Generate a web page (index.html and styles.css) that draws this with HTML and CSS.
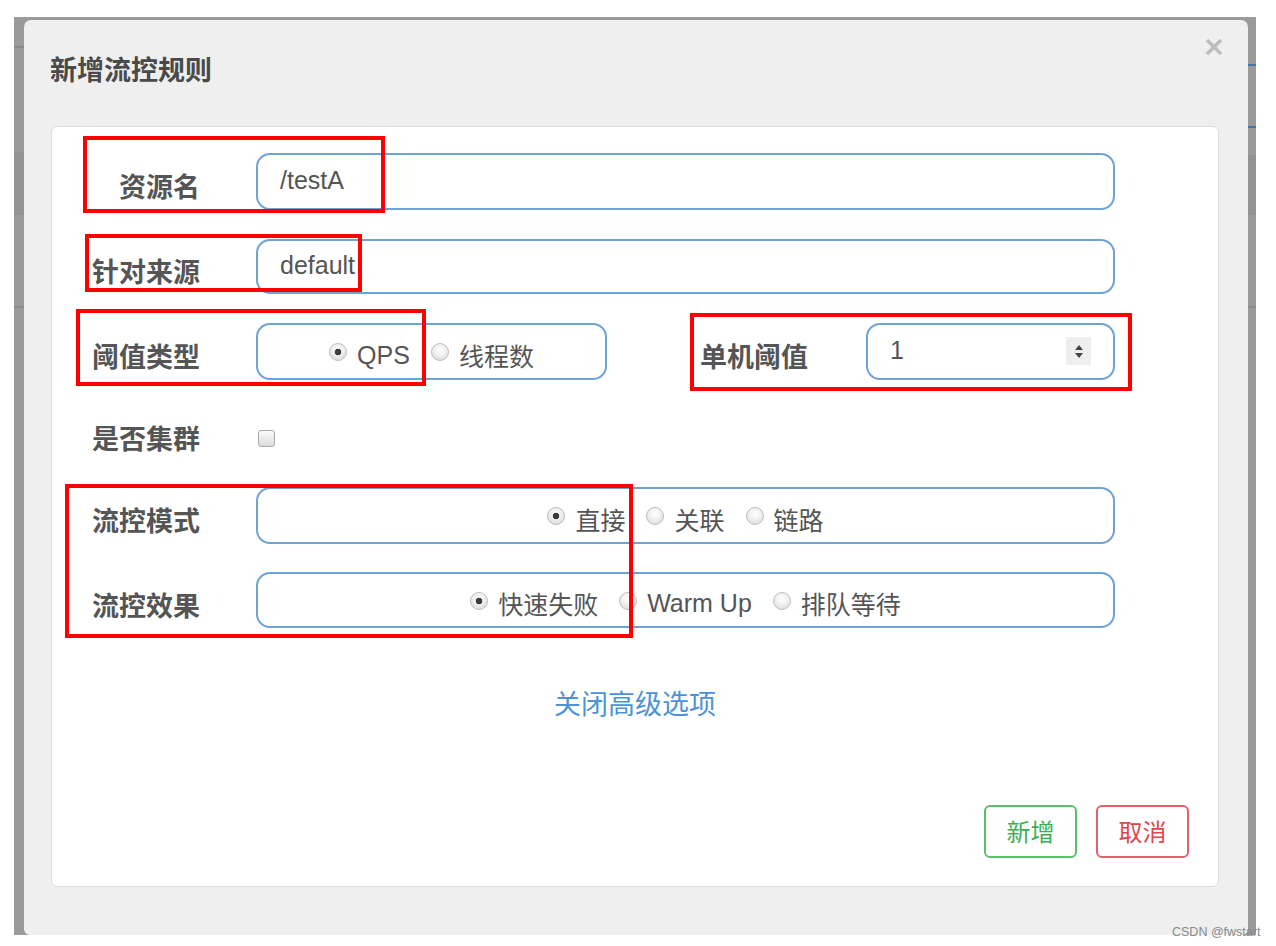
FILE: index.html
```html
<!DOCTYPE html>
<html lang="zh-CN">
<head>
<meta charset="utf-8">
<title>新增流控规则</title>
<link rel="stylesheet" href="styles.css">
</head>
<body>
<div class="page">
  <div class="backdrop">
    <div class="strip strip-left"></div>
    <div class="modal">
      <div class="modal-header">
        <h4 class="modal-title">新增流控规则</h4>
        <span class="close" aria-label="关闭">
          <svg width="20" height="20" viewBox="0 0 20 20"><path d="M3 3 L17 17 M17 3 L3 17" stroke="#bdbdbd" stroke-width="3.6" stroke-linecap="butt"/></svg>
        </span>
      </div>
      <div class="panel">
        <div class="row row-1">
          <label class="label">资源名</label>
          <div class="input input-wide"><span class="value">/testA</span></div>
        </div>
        <div class="row row-2">
          <label class="label">针对来源</label>
          <div class="input input-wide"><span class="value">default</span></div>
        </div>
        <div class="row row-3">
          <label class="label">阈值类型</label>
          <div class="input radio-box box-type">
            <label class="radio-item"><input type="radio" name="grade" checked><span class="latin">QPS</span></label>
            <label class="radio-item"><input type="radio" name="grade"><span>线程数</span></label>
          </div>
          <label class="label label-count">单机阈值</label>
          <div class="input input-count">
            <span class="value">1</span>
            <span class="spinner"><span class="tri-up"></span><span class="tri-down"></span></span>
          </div>
        </div>
        <div class="row row-4">
          <label class="label">是否集群</label>
          <input type="checkbox" class="checkbox">
        </div>
        <div class="row row-5">
          <label class="label">流控模式</label>
          <div class="input input-wide radio-box">
            <label class="radio-item"><input type="radio" name="strategy" checked><span>直接</span></label>
            <label class="radio-item"><input type="radio" name="strategy"><span>关联</span></label>
            <label class="radio-item"><input type="radio" name="strategy"><span>链路</span></label>
          </div>
        </div>
        <div class="row row-6">
          <label class="label">流控效果</label>
          <div class="input input-wide radio-box">
            <label class="radio-item"><input type="radio" name="behavior" checked><span>快速失败</span></label>
            <label class="radio-item"><input type="radio" name="behavior"><span class="latin">Warm Up</span></label>
            <label class="radio-item"><input type="radio" name="behavior"><span>排队等待</span></label>
          </div>
        </div>
        <div class="advanced"><a class="link">关闭高级选项</a></div>
        <div class="actions">
          <button class="btn btn-add">新增</button>
          <button class="btn btn-cancel">取消</button>
        </div>
      </div>
    </div>
    <div class="strip strip-right"></div>
  </div>

  <div class="mark mark-1"></div>
  <div class="mark mark-2"></div>
  <div class="mark mark-3"></div>
  <div class="mark mark-4"></div>
  <div class="mark mark-5"></div>

  <div class="watermark">CSDN @fwstart</div>
</div>
</body>
</html>
```

FILE: styles.css
```css
* { box-sizing: border-box; }

html, body {
  margin: 0;
  padding: 0;
  background: #ffffff;
}

body {
  font-family: "Liberation Sans", "Noto Sans CJK SC", sans-serif;
  color: #555;
}

.page {
  position: relative;
  width: 1276px;
  height: 946px;
  overflow: hidden;
}

.backdrop {
  margin: 17px 0 0 14px;
  width: 1242px;
  height: 918px;
  background: #9a9a9a;
  display: flex;
}

.strip {
  flex: none;
  height: 100%;
}

.strip-left {
  width: 10px;
  background:
    linear-gradient(to bottom,
      #9a9a9a 0, #9a9a9a 29px,
      #8a8a8a 29px, #8a8a8a 31px,
      #9a9a9a 31px, #9a9a9a 135px,
      #939393 135px, #939393 198px,
      #9a9a9a 198px, #9a9a9a 289px,
      #8c8c8c 289px, #8c8c8c 291px,
      #9a9a9a 291px);
}

.strip-right {
  width: 8px;
  background:
    linear-gradient(to bottom,
      #9a9a9a 0, #9a9a9a 47px,
      #3f74ad 47px, #3f74ad 49px,
      #9a9a9a 49px, #9a9a9a 109px,
      #3f74ad 109px, #3f74ad 111px,
      #9a9a9a 111px, #9a9a9a 138px,
      #939393 138px, #939393 198px,
      #9a9a9a 198px, #9a9a9a 289px,
      #8c8c8c 289px, #8c8c8c 291px,
      #9a9a9a 291px);
}

.modal {
  flex: none;
  margin-top: 3px;
  width: 1224px;
  height: 915px;
  background: #efefef;
  border-radius: 7px 7px 6px 6px;
  display: flex;
  flex-direction: column;
}

.modal-header {
  height: 106px;
  flex: none;
  display: flex;
  align-items: center;
  padding: 0 0 10px 26px;
}

.modal-title {
  margin: 0;
  font-family: "Noto Sans CJK SC", sans-serif;
  font-size: 27px;
  font-weight: 700;
  color: #4a4a4a;
}

.close {
  margin-left: auto;
  margin-right: 24px;
  align-self: flex-start;
  margin-top: 17px;
  width: 20px;
  height: 20px;
  display: block;
}

.close svg { display: block; }

.panel {
  flex: none;
  margin: 0 29px 0 27px;
  height: 761px;
  background: #ffffff;
  border: 1px solid #dcdcdc;
  border-radius: 6px;
  padding-top: 26px;
  display: flex;
  flex-direction: column;
}

.row {
  display: flex;
  align-items: center;
  flex: none;
}

.row-1 { height: 57px; margin-bottom: 29px; }
.row-2 { height: 55px; margin-bottom: 29px; }
.row-3 { height: 57px; margin-bottom: 29px; }
.row-4 { height: 49px; margin-bottom: 29px; }
.row-5 { height: 57px; margin-bottom: 28px; }
.row-6 { height: 56px; }

.label {
  width: 148px;
  flex: none;
  text-align: right;
  margin-right: 56px;
  padding-top: 10px;
  font-family: "Noto Sans CJK SC", sans-serif;
  font-size: 27px;
  font-weight: 700;
  color: #555;
  line-height: 1.2;
}

.input {
  height: 100%;
  border: 2px solid #6fa2d6;
  border-radius: 14px;
  background: #fff;
  display: flex;
  align-items: center;
  flex: none;
}

.input-wide {
  width: 859px;
  padding-left: 22px;
}

.value {
  font-family: "Liberation Sans", "Noto Sans CJK SC", sans-serif;
  font-size: 25px;
  color: #555;
  margin-top: -2px;
}

.radio-box {
  justify-content: center;
  gap: 21px;
  padding-left: 0;
}

.box-type {
  width: 351px;
}

.label-count {
  width: auto;
  margin-left: 93px;
  margin-right: 58px;
}

.input-count {
  width: 249px;
  padding: 0 22px 0 22px;
  justify-content: space-between;
}

.spinner {
  width: 25px;
  height: 28px;
  background: #eeeeee;
  display: flex;
  flex-direction: column;
  align-items: center;
  justify-content: center;
  gap: 3px;
  margin-top: -1px;
}

.tri-up, .tri-down {
  width: 0;
  height: 0;
  border-left: 4px solid transparent;
  border-right: 4px solid transparent;
}

.tri-up { border-bottom: 5px solid #444; }
.tri-down { border-top: 5px solid #444; }

.radio-item {
  display: flex;
  align-items: center;
  font-family: "Noto Sans CJK SC", sans-serif;
  font-size: 25px;
  color: #555;
  line-height: 1;
  margin-top: 7px;
}

.radio-item .latin {
  font-family: "Liberation Sans", "Noto Sans CJK SC", sans-serif;
}

.radio-item input {
  -webkit-appearance: none;
  appearance: none;
  width: 18px;
  height: 18px;
  margin: 0 10px 0 0;
  border-radius: 50%;
  border: 1px solid #bdbdbd;
  background: radial-gradient(circle at 50% 35%, #ffffff 0, #f2f2f2 40%, #d6d6d6 100%);
  flex: none;
  position: relative;
  top: -3px;
}

.radio-item input:checked {
  background:
    radial-gradient(circle, #3c3c3c 0, #3c3c3c 3px, transparent 3.6px),
    radial-gradient(circle at 50% 35%, #ffffff 0, #f0f0f0 40%, #d4d4d4 100%);
}

.checkbox {
  -webkit-appearance: none;
  appearance: none;
  width: 17px;
  height: 17px;
  margin: 10px 0 0 2px;
  border: 1px solid #a9a9a9;
  border-radius: 3px;
  background: linear-gradient(to bottom, #fafafa, #dcdcdc);
  flex: none;
}

.advanced {
  margin-top: 55px;
  height: 40px;
  text-align: center;
  flex: none;
}

.link {
  font-family: "Noto Sans CJK SC", sans-serif;
  font-size: 27px;
  line-height: 40px;
  color: #4c93d6;
  cursor: pointer;
}

.actions {
  margin-top: 82px;
  display: flex;
  justify-content: flex-end;
  gap: 19px;
  padding-right: 29px;
  flex: none;
}

.btn {
  width: 93px;
  height: 53px;
  background: #fff;
  border-radius: 6px;
  font-family: "Noto Sans CJK SC", sans-serif;
  font-size: 24px;
  line-height: 1;
  padding: 0 0 2px 0;
  cursor: pointer;
}

.btn-add {
  border: 2px solid #5cbf6c;
  color: #3cae52;
}

.btn-cancel {
  border: 2px solid #e0636b;
  color: #e0464f;
}

.mark {
  position: absolute;
  border: 4px solid #ff0000;
  pointer-events: none;
}

.mark-1 { left: 83px; top: 136px; width: 302px; height: 77px; }
.mark-2 { left: 85px; top: 234px; width: 277px; height: 58px; }
.mark-3 { left: 76px; top: 309px; width: 350px; height: 77px; }
.mark-4 { left: 690px; top: 313px; width: 442px; height: 78px; }
.mark-5 { left: 65px; top: 484px; width: 568px; height: 154px; }

.watermark {
  position: absolute;
  left: 1172px;
  top: 925px;
  font-family: "Liberation Sans", sans-serif;
  font-size: 12.5px;
  color: #8a8a8a;
}
```
